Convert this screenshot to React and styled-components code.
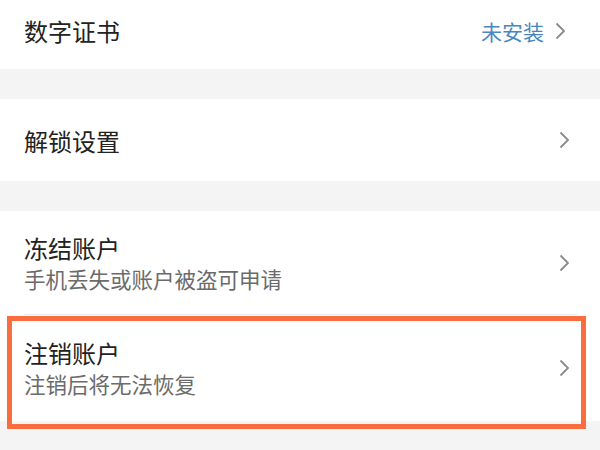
import React from 'react';
import styled, { createGlobalStyle } from 'styled-components';

const GlobalStyle = createGlobalStyle`
  html, body {
    margin: 0;
    padding: 0;
    background: #f4f4f4;
  }
  body {
    font-family: "Noto Sans CJK SC", "Noto Sans", sans-serif;
    overflow: hidden;
  }
`;

const Page = styled.div`
  width: 600px;
  height: 450px;
  background: #f4f4f4;
  display: flex;
  flex-direction: column;
  gap: 30px;
  overflow: hidden;
`;

const Group = styled.section`
  background: #fff;
  display: flex;
  flex-direction: column;
`;

const Row = styled.div`
  position: relative;
  height: ${(p) => p.$h}px;
  box-sizing: border-box;
  padding: 0 ${(p) => p.$pr || 30}px ${(p) => p.$pb || 0}px 24px;
  display: flex;
  align-items: center;
  justify-content: space-between;
`;

const Info = styled.div`
  display: flex;
  flex-direction: column;
`;

const Name = styled.span`
  font-size: 24px;
  line-height: 31px;
  color: #222;
`;

const Hint = styled.span`
  font-size: 21.5px;
  line-height: 31px;
  color: #6b6b6b;
`;

const Right = styled.div`
  display: flex;
  align-items: center;
  gap: 11px;
`;

const Status = styled.span`
  font-size: 21px;
  color: #4a87c2;
`;

const Divider = styled.div`
  height: 1px;
  margin: 0 22px 0 24px;
  background: #ececec;
`;

const Highlight = styled.div`
  position: absolute;
  top: 1px;
  left: 7px;
  right: 14px;
  bottom: -8px;
  border: 5px solid #f96d3f;
  pointer-events: none;
`;

const Chevron = () => (
  <svg width="11" height="18" viewBox="0 0 11 18">
    <polyline points="1.5,1.5 9,9 1.5,16.5" fill="none" stroke="#8a8a8a" strokeWidth="1.8" />
  </svg>
);

const App = () => (
  <Page>
    <GlobalStyle />
    <Group>
      <Row $h={69} $pb={8} $pr={34}>
        <Name>数字证书</Name>
        <Right>
          <Status>未安装</Status>
          <Chevron />
        </Right>
      </Row>
    </Group>

    <Group>
      <Row $h={82}>
        <Name>解锁设置</Name>
        <Chevron />
      </Row>
    </Group>

    <Group>
      <Row $h={103}>
        <Info>
          <Name>冻结账户</Name>
          <Hint>手机丢失或账户被盗可申请</Hint>
        </Info>
        <Chevron />
      </Row>
      <Divider />
      <Row $h={106}>
        <Info>
          <Name>注销账户</Name>
          <Hint>注销后将无法恢复</Hint>
        </Info>
        <Chevron />
        <Highlight />
      </Row>
    </Group>
  </Page>
);

export default App;
